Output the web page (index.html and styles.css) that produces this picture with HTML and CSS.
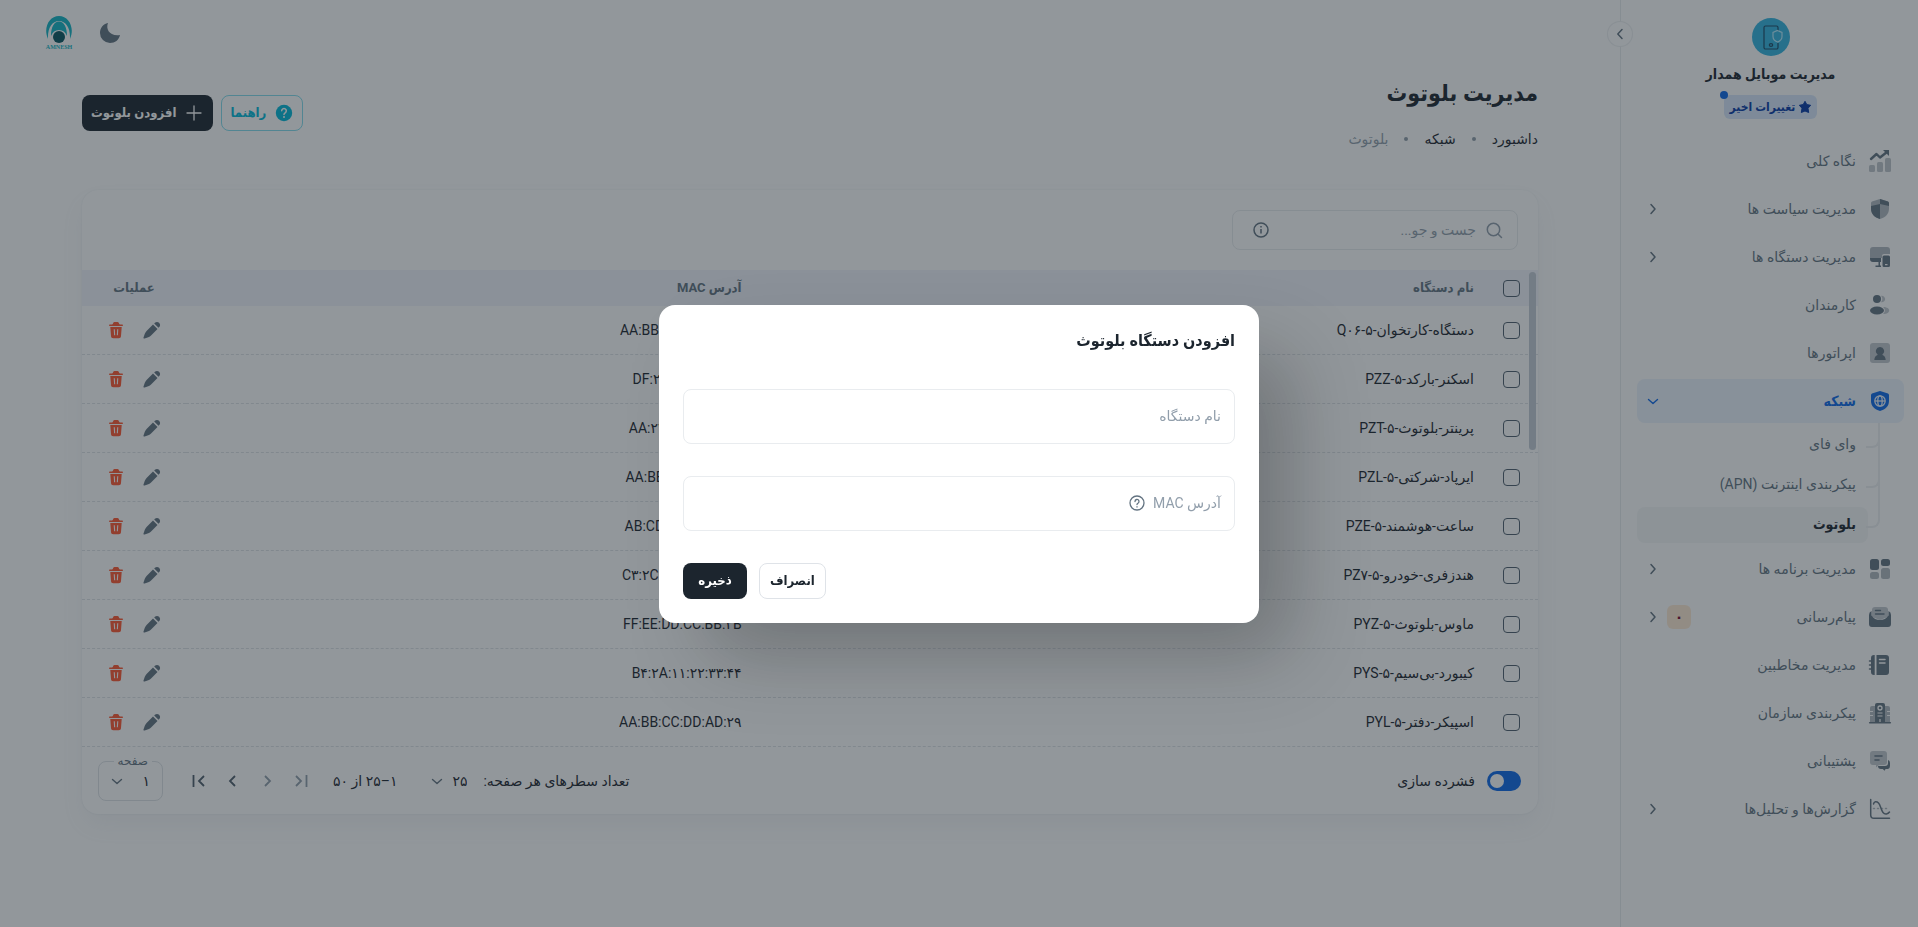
FILE: index.html
```html
<!DOCTYPE html>
<html lang="fa" dir="rtl">
<head>
  <meta charset="UTF-8">
  <title>مدیریت بلوتوث</title>
  <link rel="stylesheet" href="styles.css">
</head>
<body>
  <!-- shared icons -->
  <svg class="sprite" aria-hidden="true">
    <symbol id="chevron" viewBox="0 0 16 16"><path d="M10 3.500 5.800 8l4.200 4.500" fill="none" stroke="currentColor" stroke-width="1.500" stroke-linecap="round" stroke-linejoin="round"/></symbol>
    <symbol id="chevron-right" viewBox="0 0 16 16"><path d="M6 3.500 10 8l-4 4.500" fill="none" stroke="currentColor" stroke-width="1.500" stroke-linecap="round" stroke-linejoin="round"/></symbol>
    <symbol id="chevron-down" viewBox="0 0 16 16"><path d="M3.500 6.500 8 10.500l4.500-4" fill="none" stroke="currentColor" stroke-width="1.400" stroke-linecap="round" stroke-linejoin="round"/></symbol>
    <symbol id="pencil" viewBox="0 0 20 20"><path d="M11 4.500 4.800 10.700c-.9.900-1.500 1.800-2 3L1.500 17.400c-.3.700.4 1.300 1.100 1.100l3.700-1.300c1.200-.5 2.100-1.100 3-2L15.500 9zM12.200 3.500l.7-.7c1.200-1.200 3-1.200 4.200 0l.1.100c1.200 1.200 1.200 3 0 4.200l-.7.7z" fill="currentColor"/></symbol>
    <symbol id="trash" viewBox="0 0 20 20"><path d="M3 5.200C3 4.700 3.300 4.400 3.700 4.400h2.200c.5 0 .9-.3 1-.7l.3-.8c.2-.6.7-.9 1.300-.9h3c.6 0 1.100.3 1.300.9l.3.8c.1.400.5.700 1 .700h2.200c.4 0 .7.300.7.800 0 .4-.3.700-.7.700H3.700c-.4 0-.7-.3-.7-.7z" fill="currentColor"/><path fill-rule="evenodd" d="M4.300 7.100h11.400l-.7 9c-.1 1.400-.9 2.200-2.300 2.200H7.300c-1.400 0-2.200-.8-2.300-2.200zM7.700 9.300l.4 6h1.100l-.4-6zm3.500 0-.4 6h1.100l.4-6z" fill="currentColor"/></symbol>
  </svg>

  <div class="layout">
    <aside class="sidebar">
      <button class="collapse" type="button" aria-label="بستن منو"><svg class="icon-sm"><use href="#chevron"/></svg></button>

      <div class="brand">
        <svg class="brand-logo" viewBox="0 0 38 38">
          <circle cx="19" cy="19" r="19" fill="#33b5e0"/>
          <path d="M26 13V9.500A1.500 1.500 0 0 0 24.500 8h-11A1.500 1.500 0 0 0 12 9.500v20a1.500 1.500 0 0 0 1.500 1.500h11a1.500 1.500 0 0 0 1.500-1.500V25" fill="none" stroke="#1c4a66" stroke-width="1.200"/>
          <ellipse cx="19" cy="27" rx="1.700" ry="1.300" fill="none" stroke="#1c4a66" stroke-width="1.200"/>
          <path d="m25.500 12.500 4.500 2v4c0 2.500-1.800 4.500-4.500 5.500-2.700-1-4.500-3-4.500-5.500v-4z" fill="none" stroke="#b4ecff" stroke-width="1.200"/>
        </svg>
        <strong class="brand-name">مدیریت موبایل همدار</strong>
        <a class="changes" href="#">
          <svg class="icon-xs" viewBox="0 0 12 12"><path d="m6 .3 1.800 3.300 3.900.7L9 7.200l.7 4.300L6 10l-3.700 1.500L3 7.200.3 4.300l3.900-.7z" fill="currentColor" stroke="currentColor" stroke-linejoin="round"/></svg>
          تغییرات اخیر
        </a>
      </div>

      <nav class="nav">
        <a class="nav-item" href="#">
          <svg class="icon" viewBox="0 0 24 24" fill="currentColor"><g opacity=".4"><rect x="1" y="16" width="6" height="7" rx="1.500"/><rect x="9" y="13" width="6" height="10" rx="1.500"/><rect x="17" y="9" width="6" height="14" rx="1.500"/></g><path d="m3 10 5.500-5 3.500 3.500L19 3" fill="none" stroke="currentColor" stroke-width="2.400" stroke-linejoin="round" stroke-linecap="round"/><path d="M15 1h6v6z"/></svg>
          <span class="nav-text">نگاه کلی</span>
        </a>
        <a class="nav-item" href="#">
          <svg class="icon" viewBox="0 0 24 24" fill="currentColor"><path opacity=".5" d="M12 2 4 4.500Q3 5 3 6v5.500C3 17 6.500 20.500 12 22c5.500-1.500 9-5 9-10.500V6q0-1-1-1.500z"/><path d="m12 2 8 2.500Q21 5 21 6v3l-9-2zM12 7v15c-5.500-1.500-9-5-9-10.500V9z"/></svg>
          <span class="nav-text">مدیریت سیاست ها</span>
          <svg class="icon-sm"><use href="#chevron-right"/></svg>
        </a>
        <a class="nav-item" href="#">
          <svg class="icon" viewBox="0 0 24 24" fill="currentColor"><path opacity=".5" d="M5 2h14q3 0 3 3v4h-6q-2 0-2 2v2H2V5q0-3 3-3z"/><path d="M2 13h11v4H5q-3 0-3-3zM10.500 17H12v3.500h1V22H7.500v-1.500h3z"/><path fill-rule="evenodd" d="M16 10.500h4.500q1.500 0 1.500 1.500v8.500q0 1.500-1.500 1.500H16q-1.500 0-1.500-1.500V12q0-1.500 1.500-1.500zM17 19v1.200h2.500V19z"/></svg>
          <span class="nav-text">مدیریت دستگاه ها</span>
          <svg class="icon-sm"><use href="#chevron-right"/></svg>
        </a>
        <a class="nav-item" href="#">
          <svg class="icon" viewBox="0 0 24 24" fill="currentColor"><g opacity=".4"><path d="M13 2.800A3.300 3.300 0 1 1 13 9.200a5 5 0 0 0 0-6.400zM15 14c4 .1 6.200 1.600 6.200 3.500S19 21 15 21c2.500-2 2.500-5 0-7z"/></g><circle cx="9" cy="6" r="4"/><ellipse cx="9" cy="17.500" rx="7" ry="4"/></svg>
          <span class="nav-text">کارمندان</span>
        </a>
        <a class="nav-item" href="#">
          <svg class="icon" viewBox="0 0 24 24" fill="currentColor"><rect opacity=".4" x="2" y="2" width="20" height="20" rx="3"/><path d="M12 6a4 4 0 0 0-2.500 7.200V14c-2 .8-3 2.500-3.200 5h11.400c-.2-2.500-1.200-4.200-3.200-5v-.8A4 4 0 0 0 12 6z"/></svg>
          <span class="nav-text">اپراتورها</span>
        </a>
        <a class="nav-item active" href="#">
          <svg class="icon" viewBox="0 0 24 24"><path d="m12 2 8 2.500Q21 5 21 6v6c0 5-3.500 8.500-9 10-5.500-1.500-9-5-9-10V6q0-1 1-1.500z" fill="currentColor"/><g fill="none" stroke="#ecf3fd" stroke-width="1.300"><circle cx="12" cy="12" r="5.200"/><ellipse cx="12" cy="12" rx="2.200" ry="5.200"/><path d="M7 12h10"/></g></svg>
          <span class="nav-text">شبکه</span>
          <svg class="icon-sm"><use href="#chevron-down"/></svg>
        </a>
        <div class="subnav">
          <a class="sub-item" href="#">وای فای</a>
          <a class="sub-item" href="#">پیکربندی اینترنت (APN)</a>
          <a class="sub-item current" href="#">بلوتوث</a>
        </div>
        <a class="nav-item" href="#">
          <svg class="icon" viewBox="0 0 24 24" fill="currentColor"><rect x="2" y="2" width="9" height="11" rx="2.500"/><rect x="13" y="2" width="9" height="7" rx="2.500"/><g opacity=".5"><rect x="2" y="15" width="9" height="7" rx="2.500"/><rect x="13" y="11" width="9" height="11" rx="2.500"/></g></svg>
          <span class="nav-text">مدیریت برنامه ها</span>
          <svg class="icon-sm"><use href="#chevron-right"/></svg>
        </a>
        <a class="nav-item" href="#">
          <svg class="icon" viewBox="0 0 24 24" fill="currentColor"><path opacity=".4" d="M7 2h10q3 0 3 3v7l-8 3-8-3V5q0-3 3-3z"/><path d="M3.500 6v4.500c2 3 5 4.500 8.500 4.500s6.500-1.500 8.500-4.500V6Q23 7 23 10v9q0 3-3 3H4q-3 0-3-3v-9q0-3 2.500-4z"/><path d="M7.500 5.500h5M7.500 9h8.500" stroke="currentColor" stroke-width="1.400" stroke-linecap="round"/></svg>
          <span class="nav-text">پیام‌رسانی</span>
          <span class="count">۰</span>
          <svg class="icon-sm"><use href="#chevron-right"/></svg>
        </a>
        <a class="nav-item" href="#">
          <svg class="icon" viewBox="0 0 24 24"><path d="M6 2h.7v20H6q-3 0-3-3V5q0-3 3-3zM8.500 2H18q3 0 3 3v14q0 3-3 3H8.500z" fill="currentColor"/><path d="M11.500 6.500h5.500M11.500 10h5.500" stroke="#fff" stroke-width="1.500" stroke-linecap="round"/><path d="M1.500 8H5M1.500 12H5M1.500 16H5" stroke="currentColor" stroke-width="1.500" stroke-linecap="round"/></svg>
          <span class="nav-text">مدیریت مخاطبین</span>
        </a>
        <a class="nav-item" href="#">
          <svg class="icon" viewBox="0 0 24 24"><path opacity=".5" fill="currentColor" d="M4 5h3v16H2V7q0-2 2-2zM17 5h3q2 0 2 2v14h-5z"/><path fill="currentColor" d="M9 2h6q2 0 2 2v17H7V4q0-2 2-2z"/><path d="M1.700 21.700h20.600" stroke="currentColor" stroke-width="1.600" stroke-linecap="round"/><circle cx="12" cy="7" r="2" fill="none" stroke="#fff" stroke-width="1.300"/><path d="M9.500 12h5M9.500 15h5M12 18v3M2 10.500h3M2 14.500h3M19 10.500h3M19 14.500h3" stroke="#fff" stroke-width="1.200"/></svg>
          <span class="nav-text">پیکربندی سازمان</span>
        </a>
        <a class="nav-item" href="#">
          <svg class="icon" viewBox="0 0 24 24" fill="currentColor"><path opacity=".4" d="M5 2h11q3 0 3 3v8q0 3-3 3h-5l-3 2.500V16H5q-3 0-3-3V5q0-3 3-3z"/><path d="M20 11q2 .5 2 3v3q0 2.500-2 3h-2.500l-.8 1.800-2-1.800H13q-3 0-3-3h7q3 0 3-3z"/><path d="M7 7h7M7 11h4" stroke="currentColor" stroke-width="1.600" stroke-linecap="round"/></svg>
          <span class="nav-text">پشتیبانی</span>
        </a>
        <a class="nav-item" href="#">
          <svg class="icon" viewBox="0 0 24 24" fill="none" stroke="currentColor" stroke-width="1.500" stroke-linecap="round"><path d="M2.700 2.500V18q0 3.300 3.300 3.300h15.500"/><path d="M5.500 7C6 4.500 8.500 4 10.500 6s2.500 7 4.500 9.500 5 1.500 6.500-.5"/><path opacity=".5" stroke-dasharray="1 3" d="M5.500 11.500h16"/></svg>
          <span class="nav-text">گزارش‌ها و تحلیل‌ها</span>
          <svg class="icon-sm"><use href="#chevron-right"/></svg>
        </a>
      </nav>
    </aside>

    <div class="main">
      <header class="topbar">
        <button class="bare" type="button" aria-label="حالت شب">
          <svg class="icon" viewBox="0 0 24 24"><path d="M10 2C7.500 8 11.500 15.500 22 14c-1 5-5 8-10 8A10 10 0 0 1 2 12C2 7 5 3 10 2z" fill="#637381"/></svg>
        </button>
        <a class="company" href="#" aria-label="Amnesh">
          <svg class="company-mark" viewBox="0 0 28 28"><path d="M3 24C-2 13 4 1 14 1s16 12 11 23c.5-11-4-18-11-18S2.500 13 3 24z" fill="#12b5c5"/><path d="M6 21C6 12 9 6.500 14 6.500S22 12 22 21c-1.500-4-4-6-8-6s-6.500 2-8 6z" fill="#12b5c5"/><circle cx="14" cy="22" r="6" fill="#085560"/></svg>
          <span class="company-name">AMNESH</span>
        </a>
      </header>

      <main class="content">
        <div class="heading">
          <div class="heading-text">
            <h1>مدیریت بلوتوث</h1>
            <ul class="crumbs">
              <li><a href="#">داشبورد</a></li>
              <li><a href="#">شبکه</a></li>
              <li>بلوتوث</li>
            </ul>
          </div>
          <div class="heading-actions">
            <button class="btn btn-info" type="button">
              <svg class="icon-md" viewBox="0 0 20 20"><circle cx="10" cy="10" r="8.200" fill="currentColor"/><path d="M7.700 7.800a2.300 2.300 0 1 1 3.500 2c-.8.500-1.200.9-1.200 1.800" fill="none" stroke="#fff" stroke-width="1.500" stroke-linecap="round"/><circle cx="10" cy="14" r="1" fill="#fff"/></svg>
              راهنما
            </button>
            <button class="btn btn-dark" type="button">
              <svg class="icon-md" viewBox="0 0 20 20"><path d="M10 3v14M3 10h14" stroke="currentColor" stroke-width="1.300" stroke-linecap="round"/></svg>
              افزودن بلوتوث
            </button>
          </div>
        </div>

        <section class="card">
          <div class="toolbar">
            <div class="search">
              <svg class="icon-md" viewBox="0 0 20 20" fill="none" stroke="currentColor" stroke-width="1.500" stroke-linecap="round"><circle cx="9.500" cy="9.500" r="6.200"/><path d="m14 14 3.500 3.500"/></svg>
              <input type="text" placeholder="جست و جو..." aria-label="جست و جو">
              <svg class="icon-md search-info" viewBox="0 0 20 20" fill="none" stroke="currentColor" stroke-width="1.500"><circle cx="10" cy="10" r="7"/><path d="M10 9v4.500M10 6v1.400"/></svg>
            </div>
          </div>

          <div class="table-wrap">
            <table>
              <colgroup><col class="col-check"><col class="col-name"><col><col class="col-actions"></colgroup>
              <thead>
                <tr>
                  <th><input type="checkbox" aria-label="انتخاب همه"></th>
                  <th>نام دستگاه</th>
                  <th>آدرس MAC</th>
                  <th>عملیات</th>
                </tr>
              </thead>
              <tbody id="rows"></tbody>
            </table>
            <span class="scroll-thumb"></span>
          </div>

          <div class="table-footer">
            <label class="dense">
              <input class="switch" type="checkbox" checked>
              فشرده سازی
            </label>
            <div class="pager">
              <label for="per-page">تعداد سطرهای هر صفحه:</label>
              <span class="select">
                <select id="per-page"><option>۲۵</option></select>
                <svg class="icon-sm"><use href="#chevron-down"/></svg>
              </span>
              <span class="range">۱–۲۵ از ۵۰</span>
              <div class="pager-buttons">
                <button class="bare" type="button" disabled aria-label="صفحه اول"><svg class="icon-md" viewBox="0 0 20 20" fill="none" stroke="currentColor" stroke-width="1.800"><path d="m5 5 5 5-5 5M15.500 4v12"/></svg></button>
                <button class="bare" type="button" disabled aria-label="صفحه قبل"><svg class="icon-md" viewBox="0 0 20 20" fill="none" stroke="currentColor" stroke-width="1.800"><path d="m8 5 5 5-5 5"/></svg></button>
                <button class="bare" type="button" aria-label="صفحه بعد"><svg class="icon-md" viewBox="0 0 20 20" fill="none" stroke="currentColor" stroke-width="1.800"><path d="m12 5-5 5 5 5"/></svg></button>
                <button class="bare" type="button" aria-label="صفحه آخر"><svg class="icon-md" viewBox="0 0 20 20" fill="none" stroke="currentColor" stroke-width="1.800"><path d="m15 5-5 5 5 5M4.500 4v12"/></svg></button>
              </div>
              <span class="select page-select">
                <label for="page">صفحه</label>
                <select id="page"><option>۱</option></select>
                <svg class="icon-sm"><use href="#chevron-down"/></svg>
              </span>
            </div>
          </div>
        </section>
      </main>
    </div>
  </div>

  <div class="backdrop">
    <form class="dialog" role="dialog" aria-labelledby="dialog-title">
      <h2 id="dialog-title">افزودن دستگاه بلوتوث</h2>
      <div class="field">
        <input type="text" id="device-name">
        <label for="device-name">نام دستگاه</label>
      </div>
      <div class="field">
        <input type="text" id="device-mac">
        <label for="device-mac">آدرس MAC
          <svg class="icon-sm" viewBox="0 0 16 16" fill="none" stroke="currentColor" stroke-width="1.300"><circle cx="8" cy="8" r="7"/><path d="M6 6.500a2 2 0 1 1 3 1.700c-.7.400-1 .7-1 1.400" stroke-linecap="round"/><path d="M8 11.200v1.400"/></svg>
        </label>
      </div>
      <div class="dialog-actions">
        <button class="btn btn-outline" type="button">انصراف</button>
        <button class="btn btn-dark" type="submit">ذخیره</button>
      </div>
    </form>
  </div>

  <script src="script.js"></script>
</body>
</html>
```
FILE: styles.css
```css
* { box-sizing: border-box; }

body {
  margin: 0;
  background: #fff;
  color: #1c252e;
  font-family: Roboto, "DejaVu Sans", sans-serif;
  font-size: 14px;
  line-height: 22px;
}

a { color: inherit; text-decoration: none; }

button, input, select { font: inherit; color: inherit; }

button { cursor: pointer; }

svg { display: block; flex: none; }

/* bold text uses the narrower cut */
h1, h2, th, .btn, .brand-name, .changes, .nav-item.active, .sub-item.current {
  font-family: Roboto, "DejaVu Sans Condensed", sans-serif;
  font-weight: 700;
}

.sprite { position: absolute; width: 0; height: 0; }

.icon { width: 24px; height: 24px; }
.icon-md { width: 20px; height: 20px; }
.icon-sm { width: 16px; height: 16px; }
.icon-xs { width: 12px; height: 12px; }

.bare {
  border: 0;
  background: none;
  padding: 0;
}

.layout {
  display: flex;
  min-height: 100vh;
}

/* sidebar */
.sidebar {
  position: relative;
  width: 298px;
  flex: none;
  border-left: 1px solid rgba(145, 158, 171, 0.2);
  padding: 18px 14px 0 16px;
}

.collapse {
  position: absolute;
  top: 21px;
  left: -14px;
  width: 26px;
  height: 26px;
  padding: 4px;
  border: 1px solid rgba(145, 158, 171, 0.16);
  border-radius: 50%;
  background: #fff;
  color: #637381;
}

.brand {
  display: flex;
  flex-direction: column;
  align-items: center;
  margin-bottom: 20px;
}

.brand-logo { width: 38px; height: 38px; }

.brand-name { margin: 7px 0 10px; }

.changes {
  position: relative;
  display: flex;
  align-items: center;
  gap: 4px;
  height: 24px;
  padding: 0 6px;
  border-radius: 6px;
  background: rgba(12, 104, 233, 0.16);
  color: #0639a6;
  font-size: 12px;
}

.changes::before {
  content: "";
  position: absolute;
  top: -4px;
  left: -4px;
  width: 8px;
  height: 8px;
  border-radius: 50%;
  background: #0c68e9;
}

.nav {
  display: flex;
  flex-direction: column;
  gap: 4px;
}

.nav-item {
  display: flex;
  align-items: center;
  height: 44px;
  padding: 0 12px 0 8px;
  border-radius: 8px;
  color: #637381;
}

.nav-text {
  flex: 1;
  margin-right: 12px;
}

.nav-item.active {
  background: rgba(12, 104, 233, 0.08);
  color: #0c68e9;
}

.count {
  width: 24px;
  height: 24px;
  margin-left: 6px;
  border-radius: 6px;
  background: rgba(255, 152, 40, 0.2);
  color: #7a0930;
  font-weight: 700;
  line-height: 24px;
  text-align: center;
}

.subnav {
  position: relative;
  display: flex;
  flex-direction: column;
  gap: 4px;
  padding-right: 36px;
}

.subnav::before {
  content: "";
  position: absolute;
  top: -4px;
  right: 24px;
  bottom: 28px;
  width: 2px;
  background: #edeff2;
}

.sub-item {
  position: relative;
  height: 36px;
  padding: 0 12px;
  border-radius: 8px;
  color: #637381;
  line-height: 34px;
}

/* elbow between the tree line and the entry */
.sub-item::before {
  content: "";
  position: absolute;
  top: 7px;
  right: -12px;
  width: 12px;
  height: 12px;
  border: solid #edeff2;
  border-width: 0 2px 2px 0;
  border-bottom-right-radius: 8px;
}

.sub-item.current {
  background: rgba(145, 158, 171, 0.08);
  color: #1c252e;
}

/* main area */
.main {
  flex: 1;
  min-width: 0;
}

.topbar {
  display: flex;
  justify-content: flex-end;
  align-items: center;
  gap: 24px;
  height: 66px;
  padding: 0 44px;
}

.company {
  display: flex;
  flex-direction: column;
  align-items: center;
  width: 30px;
}

.company-mark { width: 28px; height: 28px; }

.company-name {
  color: #12b5c5;
  font-family: "Liberation Serif", serif;
  font-size: 6px;
  font-weight: 700;
  line-height: 8px;
}

.content {
  max-width: 1536px;
  margin: 0 auto;
  padding: 10px 40px 40px;
}

.heading {
  display: flex;
  justify-content: space-between;
  align-items: center;
  margin-bottom: 40px;
}

h1 {
  margin: 0 0 16px;
  font-size: 23px;
  line-height: 36px;
}

.crumbs {
  display: flex;
  gap: 16px;
  margin: 0;
  padding: 0;
  list-style: none;
}

.crumbs li {
  display: flex;
  align-items: center;
  gap: 16px;
}

.crumbs li + li::before {
  content: "";
  width: 4px;
  height: 4px;
  border-radius: 50%;
  background: #919eab;
}

.crumbs li:last-child { color: #919eab; }

.heading-actions {
  display: flex;
  gap: 8px;
}

.btn {
  display: flex;
  align-items: center;
  justify-content: center;
  gap: 8px;
  height: 36px;
  padding: 0 8px;
  border: 1px solid transparent;
  border-radius: 8px;
  font-size: 13px;
}

.btn-dark {
  background: #1c252e;
  color: #fff;
}

.btn-info {
  border-color: rgba(0, 184, 217, 0.48);
  background: none;
  color: #00b8d9;
}

.btn-outline {
  border-color: #dfe3e8;
  background: none;
}

.card {
  border-radius: 16px;
  background: #fff;
  box-shadow: 0 0 2px rgba(145, 158, 171, 0.2), 0 12px 24px -4px rgba(145, 158, 171, 0.12);
}

.toolbar { padding: 20px; }

.search {
  display: flex;
  align-items: center;
  gap: 8px;
  width: 286px;
  height: 40px;
  padding: 0 13px 0 18px;
  border: 1px solid rgba(145, 158, 171, 0.2);
  border-radius: 8px;
  color: #919eab;
}

.search input {
  flex: 1;
  min-width: 0;
  padding: 0;
  border: 0;
  outline: 0;
  background: none;
}

.search input::placeholder { color: #919eab; opacity: 1; }

.search-info { color: #637381; }

.table-wrap { position: relative; }

.scroll-thumb {
  position: absolute;
  top: 2px;
  right: 2px;
  width: 7px;
  height: 178px;
  border-radius: 4px;
  background: #c3ccd5;
}

table {
  width: 100%;
  border-collapse: separate;
  border-spacing: 0;
  table-layout: fixed;
}

.col-check { width: 48px; }
.col-name { width: 50.3%; }
.col-actions { width: 104px; }

th, td {
  padding: 0 16px;
  text-align: right;
  white-space: nowrap;
}

th {
  height: 36px;
  background: #f1f3fb;
  color: #637381;
  font-size: 13px;
}

td {
  height: 49px;
  border-bottom: 1px dashed rgba(145, 158, 171, 0.3);
}

th:first-child, td:first-child { padding: 0 18px 0 0; }

th:last-child, td:last-child {
  padding: 0;
  text-align: center;
}

td.mac { direction: ltr; }

.actions {
  display: flex;
  justify-content: center;
  gap: 16px;
}

.edit { color: #637381; }
.delete { color: #ff5630; }

input[type="checkbox"] {
  display: block;
  width: 17px;
  height: 17px;
  margin: 0;
  border: 1px solid #4f5f6e;
  border-radius: 4px;
  appearance: none;
}

.table-footer {
  display: flex;
  justify-content: space-between;
  align-items: center;
  height: 67px;
  padding: 0 17px 0 16px;
}

.dense {
  display: flex;
  align-items: center;
  gap: 12px;
}

input.switch {
  width: 34px;
  height: 20px;
  padding: 3px;
  border: 0;
  border-radius: 10px;
  background: #0c68e9;
}

.switch::before {
  content: "";
  display: block;
  width: 14px;
  height: 14px;
  margin-right: 14px;
  border-radius: 50%;
  background: #fff;
}

.pager {
  display: flex;
  align-items: center;
}

.select {
  display: grid;
  align-items: center;
  margin-right: 16px;
}

.select select, .select svg { grid-area: 1 / 1; }

.select select {
  padding: 0 0 0 22px;
  border: 0;
  background: none;
  appearance: none;
}

.select svg {
  justify-self: end;
  color: #637381;
  pointer-events: none;
}

.range { margin: 0 32px 0 22px; }

.pager-buttons {
  display: flex;
  gap: 14px;
}

.pager-buttons button { color: #4f5e6c; }

.pager-buttons button:disabled { color: #919eab; }

.page-select {
  position: relative;
  width: 65px;
  height: 40px;
  margin-right: 26px;
  padding: 0 12px 0 10px;
  border: 1px solid rgba(145, 158, 171, 0.3);
  border-radius: 8px;
}

.page-select label {
  position: absolute;
  top: -12px;
  right: 10px;
  padding: 0 4px;
  background: #fff;
  color: #637381;
  font-size: 12px;
}

/* dialog */
.backdrop {
  position: fixed;
  inset: 0;
  display: flex;
  align-items: center;
  justify-content: center;
  background: rgba(28, 37, 46, 0.48);
}

.dialog {
  width: 600px;
  padding: 24px;
  border-radius: 16px;
  background: #fff;
  box-shadow: 40px 40px 80px -8px rgba(0, 0, 0, 0.24);
}

h2 {
  margin: 0 0 36px;
  font-size: 16px;
  line-height: 24px;
}

.field {
  display: grid;
  margin-bottom: 32px;
}

.field input, .field label { grid-area: 1 / 1; }

.field input {
  width: 100%;
  height: 55px;
  padding: 0 14px;
  border: 1px solid #e9ecef;
  border-radius: 8px;
  outline: 0;
  background: none;
}

.field label {
  display: flex;
  align-items: center;
  justify-self: start;
  gap: 8px;
  padding: 0 14px;
  color: #919eab;
}

.field svg { color: #637381; }

.dialog-actions {
  display: flex;
  justify-content: flex-end;
  gap: 12px;
}

.dialog-actions .btn {
  min-width: 64px;
  padding: 0 10px;
}
```
FILE: script.js
```js
const devices = [
  ["دستگاه-کارتخوان-Q۰۶-۵", "AA:BB:CC:DD:BB:۲۵"],
  ["اسکنر-بارکد-PZZ-۵", "DF:۲۳:۱۴:۵۶:۲۲:۲۳"],
  ["پرینتر-بلوتوث-PZT-۵", "AA:۲۲:۱۱:۴۴:BB:۲۱"],
  ["ایرپاد-شرکتی-PZL-۵", "AA:BB:۲۲:DD:۱۱:۲۲"],
  ["ساعت-هوشمند-PZE-۵", "AB:CD:EF:۱۲:AC:۵۶"],
  ["هندزفری-خودرو-PZ۷-۵", "C۳:۲C:DD:۱۲:AB:CC"],
  ["ماوس-بلوتوث-PYZ-۵", "FF:EE:DD:CC:BB:۲B"],
  ["کیبورد-بی‌سیم-PYS-۵", "B۴:۲A:۱۱:۲۲:۳۳:۴۴"],
  ["اسپیکر-دفتر-PYL-۵", "AA:BB:CC:DD:AD:۲۹"]
];

document.getElementById("rows").innerHTML = devices.map(([name, mac]) => `
  <tr>
    <td><input type="checkbox" aria-label="${name}"></td>
    <td>${name}</td>
    <td class="mac">${mac}</td>
    <td>
      <div class="actions">
        <button class="bare edit" type="button" aria-label="ویرایش"><svg class="icon-md"><use href="#pencil"/></svg></button>
        <button class="bare delete" type="button" aria-label="حذف"><svg class="icon-md"><use href="#trash"/></svg></button>
      </div>
    </td>
  </tr>`).join("");
```
